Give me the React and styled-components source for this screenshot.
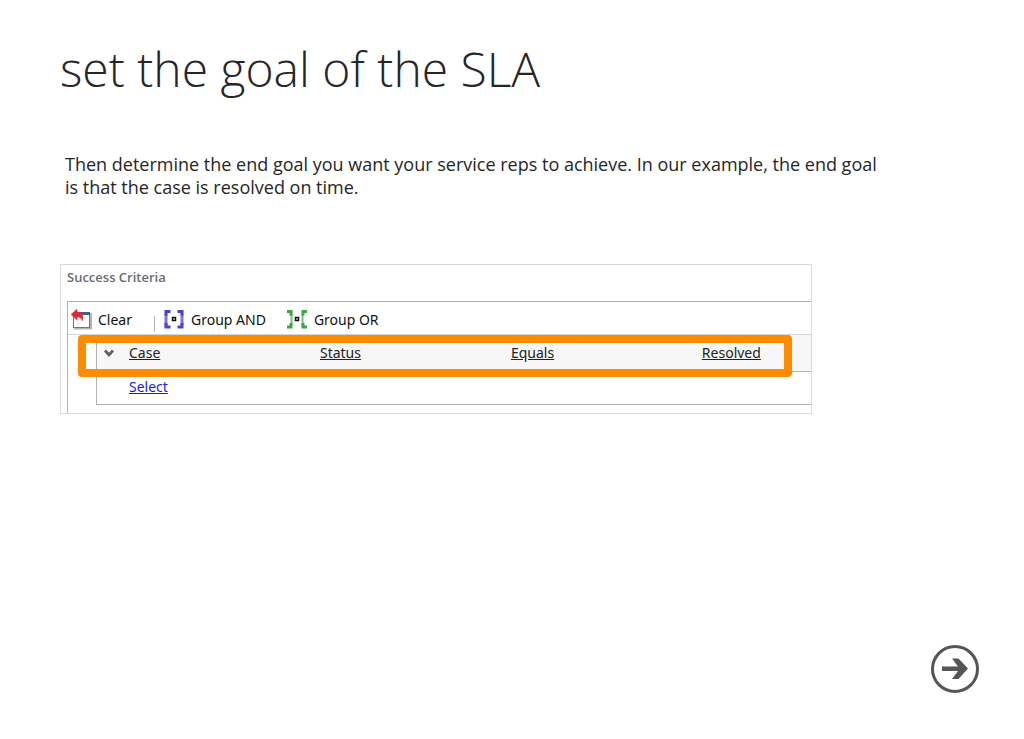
import React from "react";
import styled, { createGlobalStyle } from "styled-components";

const CONDITION = ["Case", "Status", "Equals", "Resolved"];

const App = () => {
  return (
    <>
      <GlobalStyle />
      <Slide>
        <Title>set the goal of the SLA</Title>
        <Intro>
          Then determine the end goal you want your service reps to achieve. In
          our example, the end goal is that the case is resolved on time.
        </Intro>
        <Panel>
          <PanelTitle>Success Criteria</PanelTitle>
          <Editor>
            <Toolbar>
              <ToolButton>
                <ClearIcon />
                Clear
              </ToolButton>
              <Separator />
              <ToolButton>
                <GroupAndIcon />
                Group AND
              </ToolButton>
              <ToolButton>
                <GroupOrIcon />
                Group OR
              </ToolButton>
            </Toolbar>
            <Criteria>
              <ConditionRow>
                <ExpandButton aria-label="Row options">
                  <ChevronIcon />
                </ExpandButton>
                <Fields>
                  {CONDITION.map((field) => (
                    <FieldLink href="#" key={field}>
                      {field}
                    </FieldLink>
                  ))}
                </Fields>
              </ConditionRow>
              <SelectRow>
                <SelectLink href="#">Select</SelectLink>
              </SelectRow>
              <Highlight />
            </Criteria>
          </Editor>
        </Panel>
        <Footer>
          <NextButton aria-label="Next">
            <NextIcon />
          </NextButton>
        </Footer>
      </Slide>
    </>
  );
};

const ClearIcon = () => (
  <svg width="21" height="21" viewBox="0 0 21 21" aria-hidden="true">
    <path d="M3 19.5h17V4" fill="none" stroke="#b5b5b5" strokeWidth="2" />
    <rect x="2.5" y="3.5" width="16" height="15" fill="#fff" stroke="#6d7780" />
    <rect x="8" y="3" width="11" height="3" fill="#3f5f93" />
    <path d="M4 9h13M7 9v9" stroke="#dfe2e6" />
    <path
      d="M0 5.500 6 0v3c5 0 7 3 5.500 9-1-3-2-4-5.500-4v3z"
      fill="#e5262e"
      stroke="#c4474b"
      strokeWidth="0.5"
    />
  </svg>
);

const GroupAndIcon = () => (
  <svg width="21" height="21" viewBox="0 0 21 21" aria-hidden="true">
    <path d="M2 5v11M18 5v11" stroke="#7a74dc" strokeWidth="3" />
    <path
      d="M6.500 2.500H2v4M2 14v4h4.500M13.500 2.500H18v4M18 14v4h-4.500"
      fill="none"
      stroke="#4a41cf"
      strokeWidth="3"
    />
    <rect x="8.500" y="8.500" width="3" height="3" fill="#ddd" stroke="#111" strokeWidth="1.500" />
  </svg>
);

const GroupOrIcon = () => (
  <svg width="21" height="21" viewBox="0 0 21 21" aria-hidden="true">
    <path d="M4.500 5v11M15.500 5v11" stroke="#7cc282" strokeWidth="2" />
    <path
      d="M0 2.500h4v4M4 14v4H0M20 2.500h-4v4M16 14v4h4"
      fill="none"
      stroke="#3fa447"
      strokeWidth="3"
    />
    <rect x="8.500" y="8.500" width="3" height="3" fill="#ddd" stroke="#111" strokeWidth="1.500" />
  </svg>
);

const ChevronIcon = () => (
  <svg width="10" height="10" viewBox="0 0 10 10" aria-hidden="true">
    <path d="M1 2.500 5 7l4-4.500" fill="none" stroke="#5f5f5f" strokeWidth="2.800" />
  </svg>
);

const NextIcon = () => (
  <svg width="48" height="48" viewBox="0 0 48 48" aria-hidden="true">
    <circle cx="24" cy="24" r="22.5" fill="#fff" stroke="#555" strokeWidth="3" />
    <path
      d="M11 21.500h16L21 13.500h6.500L37 23.500l-9.500 10.500H21l6-8H11z"
      fill="#555"
    />
  </svg>
);

const GlobalStyle = createGlobalStyle`
  * {
    box-sizing: border-box;
  }

  body {
    margin: 0;
    background: #fff;
    color: #262626;
    font-family: "Noto Sans", "Open Sans", sans-serif;
  }

  button {
    padding: 0;
    border: 0;
    background: none;
    color: inherit;
    font: inherit;
    cursor: pointer;
  }

  svg {
    display: block;
  }
`;

const Slide = styled.main`
  min-height: 100vh;
  display: flex;
  flex-direction: column;
  padding: 32px 45px 46px 60px;
`;

const Title = styled.h1`
  margin: 0;
  font-family: "Open Sans", sans-serif;
  font-size: 48px;
  font-weight: 300;
  line-height: 74px;
`;

const Intro = styled.p`
  max-width: 820px;
  margin: 47px 0 0;
  padding-left: 5px;
  font-family: "Open Sans", sans-serif;
  font-size: 18px;
  line-height: 23px;
`;

const Panel = styled.section`
  width: 100%;
  max-width: 752px;
  margin-top: 65px;
  padding-left: 6px;
  border: 1px solid #d9d9d9;
  font-size: 14px;
`;

const PanelTitle = styled.h2`
  margin: 0;
  color: #6b6b6b;
  font-family: "Open Sans", sans-serif;
  font-size: 13px;
  font-weight: 600;
  line-height: 24px;
`;

const Editor = styled.div`
  margin-top: 12px;
  padding-bottom: 8px;
  border: solid #b3b3b3;
  border-width: 1px 0 0 1px;
`;

const Toolbar = styled.div`
  display: flex;
  align-items: center;
  height: 33px;
  border-bottom: 1px solid #d4d4d4;
  color: #111;
`;

const ToolButton = styled.button`
  display: flex;
  align-items: center;
  gap: 6px;
  padding: 2px 18px 0 3px;
`;

const Separator = styled.span`
  align-self: flex-end;
  width: 1px;
  height: 16px;
  margin: 0 6px 2px 4px;
  background: #b3b3b3;
`;

const Criteria = styled.div`
  position: relative;
  margin-left: 28px;
  border: solid #b3b3b3;
  border-width: 0 0 1px 1px;
`;

const ConditionRow = styled.div`
  display: flex;
  align-items: center;
  height: 37px;
  border-bottom: 1px solid #b3b3b3;
  background: #f7f7f7;
`;

const ExpandButton = styled.button`
  width: 32px;
  padding-left: 7px;
`;

const Fields = styled.div`
  flex: 1;
  display: grid;
  grid-template-columns: repeat(3, 28%) auto;
  padding-bottom: 2px;
`;

const FieldLink = styled.a`
  justify-self: start;
  color: #222;
`;

const SelectRow = styled.div`
  padding: 0 0 2px 32px;
  line-height: 30px;
`;

const SelectLink = styled.a`
  color: #1a1aee;
`;

const Highlight = styled.div`
  position: absolute;
  top: 0;
  left: -19px;
  right: 19px;
  height: 42px;
  border: 8px solid #ff8c00;
  border-radius: 4px;
  pointer-events: none;
`;

const Footer = styled.footer`
  display: flex;
  justify-content: flex-end;
  margin-top: auto;
`;

const NextButton = styled.button`
  border-radius: 50%;
`;

export default App;
